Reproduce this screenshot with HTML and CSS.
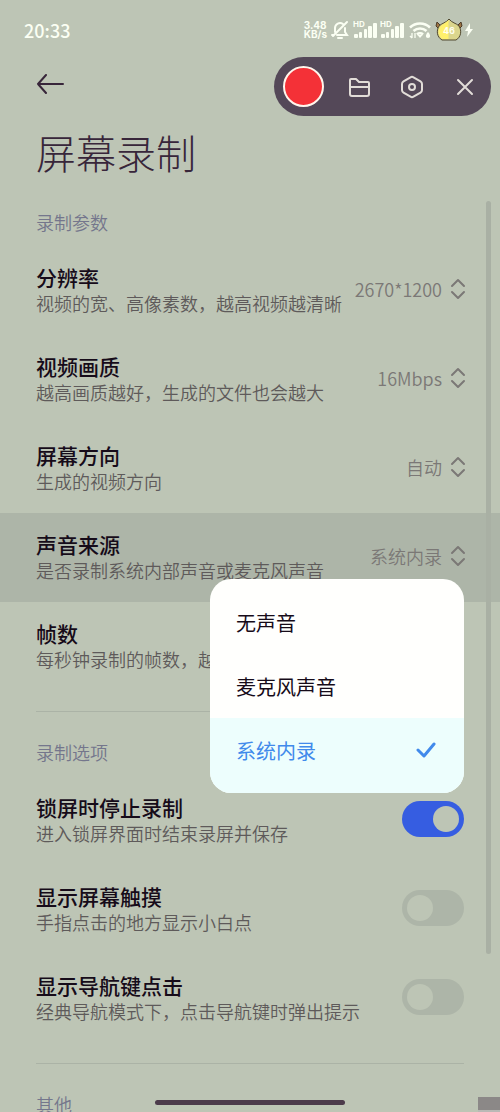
FILE: index.html
```
<!DOCTYPE html>
<html lang="zh-CN">
<head>
<meta charset="utf-8">
<meta name="viewport" content="width=device-width, initial-scale=1">
<title>屏幕录制</title>
<link rel="stylesheet" href="styles.css">
</head>
<body>
<div class="screen">
  <div class="status">
    <span class="clock">20:33</span>
    <div class="status-icons">
      <span class="speed"><span>3.48</span><span>KB/s</span></span>
      <svg class="bell" width="18" height="20" viewBox="0 0 18 20" fill="none" stroke="currentColor" stroke-width="2" stroke-linecap="round"><path d="M4 12V8a5 5 0 0 1 8-4M14 8v4l2 3H6M1 15h1M16 2 2 16M7 18h4"/></svg>
      <svg width="25" height="20" viewBox="0 0 25 20" fill="currentColor"><text class="hd" x="0" y="7">HD</text><rect x="1" y="14" width="4" height="4" rx="1"/><rect x="6" y="12" width="3" height="6" rx="1"/><rect x="11" y="9" width="3" height="9" rx="1"/><rect x="15" y="6" width="4" height="12" rx="1"/><rect x="20" y="3" width="4" height="15" rx="1"/></svg>
      <svg width="25" height="20" viewBox="0 0 25 20" fill="currentColor"><text class="hd" x="0" y="7">HD</text><rect x="1" y="14" width="4" height="4" rx="1"/><rect x="6" y="12" width="3" height="6" rx="1"/><rect x="11" y="9" width="3" height="9" rx="1"/><rect x="15" y="6" width="4" height="12" rx="1"/><rect x="20" y="3" width="4" height="15" rx="1"/></svg>
      <svg class="wifi" width="22" height="20" viewBox="0 0 22 20" fill="none" stroke="currentColor" stroke-width="2.6"><path d="M1 7.5a14.5 14.5 0 0 1 20 0M4.5 11a9.5 9.5 0 0 1 13 0M8 14.5a4.5 4.5 0 0 1 6 0"/><path d="m8.500 15 2.500 3 2.500-3z" fill="currentColor" stroke="none"/><path d="M3 13v5M1 16l2 2M6 18v-5" stroke-width="1.300"/><path d="M19 12c3 3 2.500 6 0 6s-3-3 0-6z" fill="currentColor" stroke="none"/></svg>
      <svg class="battery" width="28" height="24" viewBox="0 0 28 24"><path d="M5 7 2 4 1 8l3 3M23 7l3-3 1 4-3 3" fill="#9d7444" stroke="#4b3b27"/><path d="M14 1C11 5 7 5 4 8c-3 5-2 11 3 14h14c5-3 6-9 3-14-3-3-7-3-10-7z" fill="#dbd68d" stroke="#51482f"/><path d="M13.500 2C11 5 7 6 5 9c-3 5-1 9 2 12h6.500z" fill="#fff06c"/><text class="charge" x="14" y="16">46</text></svg>
      <svg class="bolt" width="8" height="16" viewBox="0 0 8 16" fill="currentColor"><path d="M5 1 0 9h3l-1 6 6-8H5z"/></svg>
    </div>
  </div>

  <header class="header">
    <a class="back" href="#" aria-label="返回"><svg width="28" height="20" viewBox="0 0 28 20" fill="none" stroke="currentColor" stroke-width="2" stroke-linecap="round" stroke-linejoin="round"><path d="M27 10H2M10 1 2 10l8 9"/></svg></a>
    <h1>屏幕录制</h1>
  </header>

  <div class="recorder">
    <button class="record" type="button" aria-label="开始录制"></button>
    <button class="tool" type="button" aria-label="文件夹"><svg width="24" height="24" viewBox="0 0 24 24" fill="none" stroke="currentColor" stroke-width="2" stroke-linejoin="round"><path d="M3 19V5q0-1 1-1h5l3 3h9q1 0 1 1v11q0 2-2 2H5q-2 0-2-2zM3 12h19"/></svg></button>
    <button class="tool" type="button" aria-label="设置"><svg width="24" height="24" viewBox="0 0 24 24" fill="none" stroke="currentColor" stroke-width="2" stroke-linejoin="round"><path d="M10.500 2.300q1.500-.9 3 0l7 4q1.500.9 1.500 2.600v6.200q0 1.700-1.500 2.600l-7 4q-1.500.9-3 0l-7-4Q2 16.800 2 15.100V8.900q0-1.700 1.500-2.600z"/><circle cx="12" cy="12" r="3"/></svg></button>
    <button class="tool" type="button" aria-label="关闭"><svg width="24" height="24" viewBox="0 0 24 24" fill="none" stroke="currentColor" stroke-width="2" stroke-linecap="round"><path d="m5 5 14 14M19 5 5 19"/></svg></button>
  </div>

  <main class="list">
    <section class="group">
      <h2>录制参数</h2>
      <div class="row">
        <div class="text"><label class="name" for="size">分辨率</label><p>视频的宽、高像素数，越高视频越清晰</p></div>
        <select class="value" id="size"><option>2670*1200</option></select>
        <svg class="updown" width="16" height="22" viewBox="0 0 16 22"><path d="m2 8 6-6 6 6M2 14l6 6 6-6"/></svg>
      </div>
      <div class="row">
        <div class="text"><label class="name" for="quality">视频画质</label><p>越高画质越好，生成的文件也会越大</p></div>
        <select class="value" id="quality"><option>16Mbps</option></select>
        <svg class="updown" width="16" height="22" viewBox="0 0 16 22"><path d="m2 8 6-6 6 6M2 14l6 6 6-6"/></svg>
      </div>
      <div class="row">
        <div class="text"><label class="name" for="direction">屏幕方向</label><p>生成的视频方向</p></div>
        <select class="value" id="direction"><option>自动</option></select>
        <svg class="updown" width="16" height="22" viewBox="0 0 16 22"><path d="m2 8 6-6 6 6M2 14l6 6 6-6"/></svg>
      </div>
      <div class="row active">
        <div class="text"><label class="name" for="source">声音来源</label><p>是否录制系统内部声音或麦克风声音</p></div>
        <button class="value" id="source" type="button" aria-haspopup="listbox" aria-expanded="true">系统内录</button>
        <svg class="updown" width="16" height="22" viewBox="0 0 16 22"><path d="m2 8 6-6 6 6M2 14l6 6 6-6"/></svg>
        <div class="menu" role="listbox" aria-label="声音来源">
          <button class="option" type="button" role="option" aria-selected="false">无声音</button>
          <button class="option" type="button" role="option" aria-selected="false">麦克风声音</button>
          <button class="option selected" type="button" role="option" aria-selected="true">系统内录<svg width="20" height="18" viewBox="0 0 20 18" fill="none" stroke="currentColor" stroke-width="3" stroke-linecap="round" stroke-linejoin="round"><path d="m2 9 6 6L18 3"/></svg></button>
        </div>
      </div>
      <div class="row">
        <div class="text"><span class="name">帧数</span><p>每秒钟录制的帧数，越</p></div>
      </div>
    </section>

    <section class="group">
      <h2>录制选项</h2>
      <div class="row">
        <div class="text"><label class="name" for="lock">锁屏时停止录制</label><p>进入锁屏界面时结束录屏并保存</p></div>
        <input class="switch" id="lock" type="checkbox" checked>
      </div>
      <div class="row">
        <div class="text"><label class="name" for="touch">显示屏幕触摸</label><p>手指点击的地方显示小白点</p></div>
        <input class="switch" id="touch" type="checkbox">
      </div>
      <div class="row">
        <div class="text"><label class="name" for="nav">显示导航键点击</label><p>经典导航模式下，点击导航键时弹出提示</p></div>
        <input class="switch" id="nav" type="checkbox">
      </div>
    </section>

    <section class="group">
      <h2>其他</h2>
    </section>
  </main>

  <div class="scroll-thumb"></div>
  <div class="home-bar"></div>
  <div class="corner"></div>
</div>
</body>
</html>
```
FILE: styles.css
```
* { box-sizing: border-box; }

body {
  margin: 0;
  background: #bdc5b5;
  color: #160b19;
  font-family: "Noto Sans CJK SC", sans-serif;
}

h1, h2, p { margin: 0; font-weight: 400; }

button, select, input { margin: 0; font: inherit; }

button { padding: 0; border: 0; background: none; cursor: pointer; }

svg { display: block; flex: none; }

.screen {
  position: relative;
  display: flex;
  flex-direction: column;
  height: 100vh;
  overflow: hidden;
}

.status {
  display: flex;
  justify-content: space-between;
  align-items: center;
  height: 60px;
  padding: 0 27px 0 24px;
  color: #fbfff3;
}

.clock { font-size: 18px; font-weight: 500; }

.status-icons { display: flex; align-items: center; gap: 2px; }

.speed {
  display: grid;
  margin-right: 2px;
  font: 700 10px/9px Inter, sans-serif;
}

.bell { margin-right: 2px; }
.wifi { margin: 0 2px; }

.hd { font: 700 8px Inter, sans-serif; }

.charge {
  font: 700 9px Inter, sans-serif;
  fill: #fffff0;
  text-anchor: middle;
}

.header { padding: 14px 36px 0; }

.back { display: inline-block; vertical-align: top; color: #38263a; }

h1 {
  margin-top: 24px;
  color: #38263a;
  font-size: 40px;
  font-weight: 300;
  line-height: 60px;
}

.recorder {
  position: absolute;
  top: 57px;
  right: 9px;
  display: flex;
  align-items: center;
  gap: 29px;
  height: 59px;
  padding: 0 14px 0 9px;
  border-radius: 30px;
  background: #544858;
}

.record {
  width: 41px;
  height: 41px;
  margin-right: -6px;
  border: 2px solid #fff6ec;
  border-radius: 50%;
  background: #f43137;
}

.tool { color: #e2ddd8; }

.list {
  flex: 1;
  min-height: 0;
  padding-top: 28px;
  overflow: hidden;
}

h2 {
  padding: 0 36px;
  margin-bottom: 12px;
  color: #74768c;
  font-size: 18px;
  font-weight: 350;
  line-height: 24px;
}

.group + .group::before {
  content: "";
  display: block;
  height: 1px;
  margin: 20px 36px 28px;
  background: #abb3a6;
}

.row {
  position: relative;
  display: flex;
  align-items: center;
  padding: 17px 34px 20px 36px;
}

.row.active { background: #adb5a8; }

.text { flex: 1; white-space: nowrap; }

.name { display: block; font-size: 21px; font-weight: 500; line-height: 28px; }

.text p { color: #5e5a5a; font-size: 18px; font-weight: 350; line-height: 24px; }

.value {
  appearance: none;
  field-sizing: content;
  padding: 0;
  margin-right: 8px;
  border: 0;
  background: none;
  color: #7b7876;
  font-size: 18px;
  font-weight: 350;
  line-height: 24px;
}

.updown {
  fill: none;
  stroke: #7b7876;
  stroke-width: 2;
  stroke-linecap: round;
  stroke-linejoin: round;
}

.menu {
  position: absolute;
  z-index: 2;
  top: 66px;
  right: 36px;
  width: 254px;
  padding-top: 11px;
  overflow: hidden;
  border-radius: 21px;
  background: #fffffd;
}

.option {
  display: flex;
  align-items: center;
  justify-content: space-between;
  width: 100%;
  height: 64px;
  padding: 0 28px 0 26px;
  color: #160b19;
  font-size: 20px;
}

.option.selected {
  height: 75px;
  padding-bottom: 11px;
  background: #edfefd;
  color: #418aeb;
}

.switch {
  appearance: none;
  width: 62px;
  height: 36px;
  padding: 5px;
  margin-right: 2px;
  border-radius: 18px;
  background: #adb5a8;
}

.switch::before {
  content: "";
  display: block;
  width: 26px;
  height: 26px;
  border-radius: 50%;
  background: #bdc5b5;
}

.switch:checked { background: #365de1; }
.switch:checked::before { margin-left: auto; }

.scroll-thumb {
  position: absolute;
  top: 201px;
  right: 9px;
  bottom: 158px;
  width: 5px;
  border-radius: 3px;
  background: #a9b0a4;
}

.home-bar {
  position: absolute;
  bottom: 7px;
  left: 31%;
  right: 31%;
  height: 5px;
  border-radius: 3px;
  background: #4c3b4b;
}

.corner {
  position: absolute;
  right: 0;
  bottom: 0;
  width: 22px;
  height: 15px;
  border-bottom: 2px solid #b9b9b6;
  background: #8b8887;
}
```
